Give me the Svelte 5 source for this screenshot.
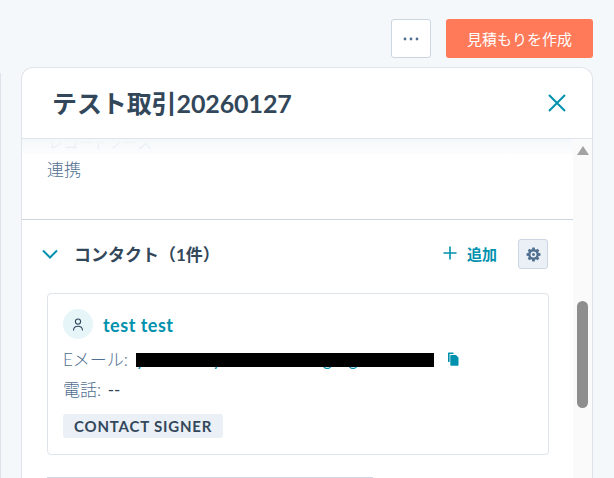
<script>
  let contacts = [{ name: 'test test', maskedEmail: 'yxxxxxxxxyxxxxxxxxxxxxgxxgxxxtxxx', phone: '--', tag: 'CONTACT SIGNER' }];
</script>

<div class="page">
  <div class="toolbar">
    <button class="btn-more" aria-label="More">
      <svg width="16" height="4" viewBox="0 0 16 4"><circle cx="2" cy="2" r="1.4" /><circle cx="8" cy="2" r="1.4" /><circle cx="14" cy="2" r="1.4" /></svg>
    </button>
    <button class="btn-primary">見積もりを作成</button>
  </div>

  <div class="main">
    <div class="left-edge"></div>
    <div class="panel">
      <div class="panel-header">
        <h2>テスト取引20260127</h2>
        <button class="btn-close" aria-label="Close">
          <svg width="20" height="20" viewBox="0 0 20 20"><path d="M2 2 L18 18 M18 2 L2 18" /></svg>
        </button>
      </div>

      <div class="panel-body">
        <div class="scroll-area">
          <div class="record-block">
            <div class="clipped">レコードソース</div>
            <div class="value">連携</div>
          </div>
          <div class="fade"></div>

          <section class="contacts">
            <div class="section-head">
              <svg class="chevron" width="16" height="10" viewBox="0 0 16 10"><path d="M1 1.5 L8 8.5 L15 1.5" /></svg>
              <h3>コンタクト（{contacts.length}件）</h3>
              <button class="btn-add">
                <svg width="14" height="14" viewBox="0 0 14 14"><path d="M7 0.5 V13.5 M0.5 7 H13.5" /></svg>
                追加
              </button>
              <button class="btn-gear" aria-label="Settings">
                <svg width="15" height="15" viewBox="0 0 14 14">
                  <path fill-rule="evenodd" d="M5.9 0.5h2.2l.3 1.7 1 .4 1.4-1 1.6 1.6-1 1.4.4 1 1.7.3v2.2l-1.7.3-.4 1 1 1.4-1.6 1.6-1.4-1-1 .4-.3 1.7H5.9l-.3-1.7-1-.4-1.4 1-1.6-1.6 1-1.4-.4-1-1.7-.3V5.9l1.7-.3.4-1-1-1.4 1.6-1.6 1.4 1 1-.4zM7 4.2a2.8 2.8 0 1 0 0 5.6 2.8 2.8 0 0 0 0-5.6zM7 5.6a1.4 1.4 0 1 1 0 2.8 1.4 1.4 0 0 1 0-2.8z" />
                </svg>
              </button>
            </div>

            {#each contacts as contact}
              <div class="card">
                <div class="card-name">
                  <span class="avatar">
                    <svg width="12" height="13" viewBox="0 0 12 13"><circle cx="6" cy="3.6" r="2.6" /><path d="M1.5 12.5 C1.5 9.5 3.5 8.2 6 8.2 C8.5 8.2 10.5 9.5 10.5 12.5" /></svg>
                  </span>
                  <span class="name">{contact.name}</span>
                </div>
                <div class="row email">
                  <span>Eメール:</span>
                  <span class="email-value">{contact.maskedEmail}<span class="redacted"></span></span>
                  <svg class="copy" width="12" height="14" viewBox="0 0 12 14">
                    <path d="M1.5 0.5 H6.5 V2 H2.6 V10 H1 V1 Z M4 3 H9 L11.5 5.5 V13 Q11.5 13.7 10.8 13.7 H4 Q3.3 13.7 3.3 13 V3.7 Q3.3 3 4 3 Z" />
                  </svg>
                </div>
                <div class="row">電話: <span class="dark">{contact.phone}</span></div>
                <span class="tag">{contact.tag}</span>
              </div>
            {/each}

            <div class="next-card"></div>
          </section>
        </div>

        <div class="scrollbar">
          <span class="arrow"></span>
          <span class="thumb"></span>
        </div>
      </div>
    </div>
  </div>
</div>

<style>
  :global(body) {
    margin: 0;
    background: #f5f8fa;
  }

  .page {
    width: 614px;
    height: 478px;
    overflow: hidden;
    font-family: Lato, "Noto Sans CJK JP", sans-serif;
    color: #33475b;
  }

  .toolbar {
    display: flex;
    justify-content: flex-end;
    gap: 15px;
    padding: 19px 21px 9px 0;
  }

  button {
    font-family: inherit;
    cursor: pointer;
    padding: 0;
  }

  .btn-more {
    width: 40px;
    height: 39px;
    background: #fff;
    border: 1px solid #cbd6e2;
    border-radius: 3px;
    display: flex;
    align-items: center;
    justify-content: center;
  }

  .btn-more svg {
    fill: #516f90;
  }

  .btn-primary {
    width: 147px;
    height: 39px;
    background: #ff7a59;
    border: none;
    border-radius: 3px;
    color: #fff;
    font-size: 15px;
  }

  .main {
    display: flex;
  }

  .left-edge {
    width: 1px;
    margin-top: 6px;
    margin-right: 20px;
    background: #dfe3eb;
  }

  .panel {
    width: 572px;
    height: 420px;
    box-sizing: border-box;
    background: #fff;
    border: 1px solid #dfe3eb;
    border-bottom: none;
    border-radius: 12px 12px 0 0;
    display: flex;
    flex-direction: column;
  }

  .panel-header {
    height: 71px;
    flex: none;
    box-sizing: border-box;
    border-bottom: 1px solid #dfe3eb;
    display: flex;
    align-items: center;
    justify-content: space-between;
    padding: 0 25px 0 30px;
  }

  h2 {
    margin: 0 0 2px;
    font-size: 25px;
    letter-spacing: -0.1px;
    font-weight: 700;
    color: #33475b;
  }

  .btn-close {
    background: none;
    border: none;
    display: flex;
  }

  .btn-close svg {
    fill: none;
    stroke: #0091ae;
    stroke-width: 2;
  }

  .panel-body {
    flex: 1;
    display: flex;
    min-height: 0;
  }

  .scroll-area {
    flex: 1;
    min-width: 0;
    overflow: hidden;
    position: relative;
  }

  .fade {
    position: absolute;
    top: 0;
    left: 0;
    right: 0;
    height: 15px;
    background: linear-gradient(rgba(245, 248, 250, 1), rgba(250, 252, 253, 0.75));
  }

  .record-block {
    height: 80px;
    padding-left: 26px;
    border-bottom: 1px solid #cbd6e2;
    overflow: hidden;
  }

  .clipped {
    font-size: 15px;
    line-height: 20px;
    margin-top: -7px;
    color: #99acc2;
  }

  .value {
    font-size: 17px;
    line-height: 24px;
    margin-top: 6px;
    margin-left: -1px;
    font-weight: 300;
    color: #516f90;
  }

  .contacts {
    padding: 0 25px;
  }

  .section-head {
    height: 30px;
    margin-top: 19px;
    display: flex;
    align-items: center;
  }

  .chevron {
    margin-left: -5px;
    fill: none;
    stroke: #0091ae;
    stroke-width: 2;
  }

  h3 {
    margin: 0 0 2px 16px;
    font-size: 17px;
    font-weight: 700;
    flex: 1;
  }

  .btn-add {
    background: none;
    border: none;
    display: flex;
    align-items: center;
    gap: 10px;
    margin-bottom: 2px;
    font-size: 15px;
    font-weight: 700;
    color: #0091ae;
  }

  .btn-add svg {
    fill: none;
    stroke: #0091ae;
    stroke-width: 1.6;
  }

  .btn-gear {
    width: 30px;
    height: 30px;
    margin-left: 21px;
    box-sizing: border-box;
    background: #eaf0f6;
    border: 1px solid #cbd6e2;
    border-radius: 3px;
    display: flex;
    align-items: center;
    justify-content: center;
  }

  .btn-gear svg {
    fill: #516f90;
  }

  .card {
    margin-top: 24px;
    width: 502px;
    height: 162px;
    box-sizing: border-box;
    border: 1px solid #dfe3eb;
    border-radius: 4px;
    padding: 15px 15px 0;
  }

  .card-name {
    display: flex;
    align-items: center;
    gap: 10px;
  }

  .avatar {
    width: 30px;
    height: 30px;
    border-radius: 50%;
    background: #e5f5f8;
    display: flex;
    align-items: center;
    justify-content: center;
  }

  .avatar svg {
    fill: none;
    stroke: #33475b;
    stroke-width: 1.1;
  }

  .name {
    font-size: 18px;
    font-weight: 700;
    letter-spacing: 0.5px;
    margin-top: 1px;
    color: #0091ae;
  }

  .row {
    font-size: 17px;
    line-height: 24px;
    font-weight: 300;
    color: #516f90;
    margin-top: 6px;
  }

  .email {
    display: flex;
    align-items: center;
    margin-top: 9px;
  }

  .email-value {
    position: relative;
    width: 298px;
    margin-left: 8px;
    white-space: nowrap;
    font-weight: 400;
    line-height: 14px;
    color: #0091ae;
  }

  .redacted {
    position: absolute;
    inset: 0;
    background: #000;
  }

  .copy {
    margin-left: 13px;
    margin-top: -2px;
    fill: #0091ae;
  }

  .dark {
    font-weight: 400;
    margin-left: 2px;
    color: #33475b;
  }

  .tag {
    display: inline-block;
    margin-top: 12px;
    height: 24px;
    line-height: 24px;
    padding: 0 11px;
    background: #eaf0f6;
    border-radius: 3px;
    font-size: 15px;
    font-weight: 700;
    letter-spacing: 0.8px;
  }

  .next-card {
    margin-top: 22px;
    width: 326px;
    height: 1px;
    background: #cbd6e2;
  }

  .scrollbar {
    width: 19px;
    flex: none;
    background: #fafafa;
    display: flex;
    flex-direction: column;
    align-items: center;
  }

  .arrow {
    width: 0;
    height: 0;
    margin-top: 7px;
    border-left: 6px solid transparent;
    border-right: 6px solid transparent;
    border-bottom: 9px solid #a3a3a3;
  }

  .thumb {
    width: 11px;
    height: 107px;
    margin-top: 146px;
    background: #8e8e8e;
    border-radius: 6px;
  }
</style>
